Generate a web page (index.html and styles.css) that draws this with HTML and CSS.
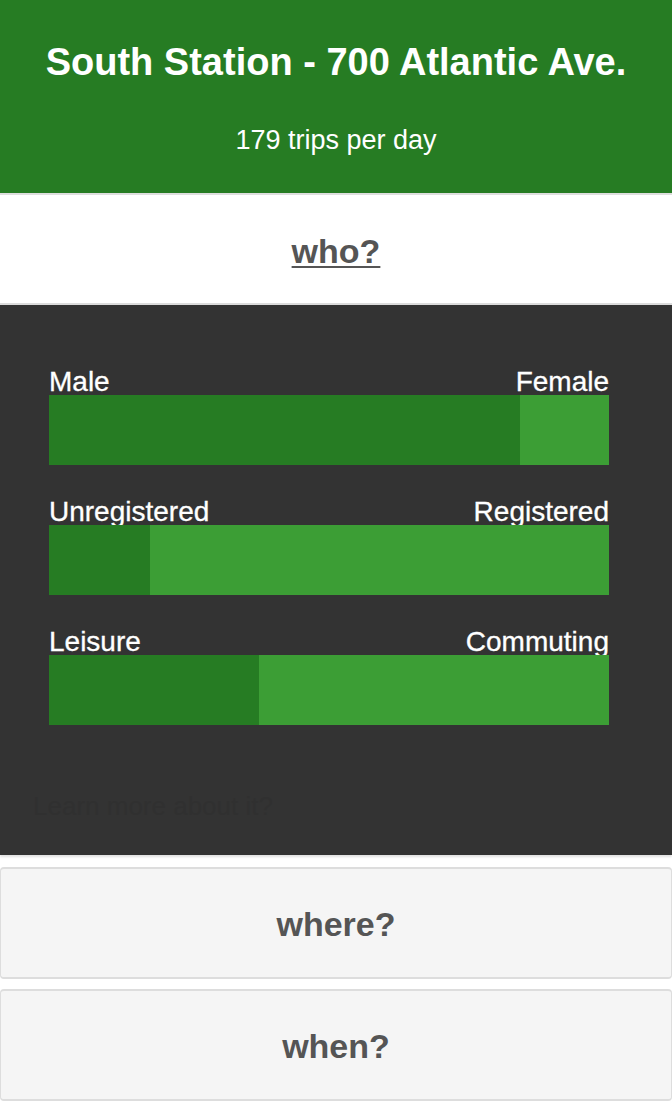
FILE: index.html
```html
<!DOCTYPE html>
<html lang="en">
<head>
<meta charset="utf-8">
<title>South Station</title>
<link rel="stylesheet" href="styles.css">
</head>
<body>
<header class="station">
  <h1 class="station-title">South Station - 700 Atlantic Ave.</h1>
  <p class="station-sub">179 trips per day</p>
</header>

<section class="panel-open">
  <div class="open-heading"><a class="open-link" href="#">who?</a></div>
  <div class="open-body">
    <div class="stat">
      <div class="stat-labels"><span>Male</span><span>Female</span></div>
      <div class="bar"><div class="bar-fill" style="width:84.1%"></div></div>
    </div>
    <div class="stat">
      <div class="stat-labels"><span>Unregistered</span><span>Registered</span></div>
      <div class="bar"><div class="bar-fill" style="width:18%"></div></div>
    </div>
    <div class="stat">
      <div class="stat-labels"><span>Leisure</span><span>Commuting</span></div>
      <div class="bar"><div class="bar-fill" style="width:37.5%"></div></div>
    </div>
    <p class="faint">Learn more about it?</p>
  </div>
</section>

<section class="panel">
  <div class="panel-heading">where?</div>
</section>
<section class="panel">
  <div class="panel-heading">when?</div>
</section>
</body>
</html>
```

FILE: styles.css
```css
html, body {
  margin: 0;
  padding: 0;
  background: #fff;
}
body {
  font-family: "Liberation Sans", Arial, Helvetica, sans-serif;
  width: 672px;
  overflow: hidden;
}

.station {
  background: #267c23;
  color: #fff;
  text-align: center;
  padding: 40px 0 37px;
  border-bottom: 2px solid #dedede;
}
.station-title {
  margin: 0;
  font-size: 38px;
  line-height: 44px;
  font-weight: bold;
}
.station-sub {
  margin: 40px 0 0;
  font-size: 27px;
  line-height: 32px;
}

.panel-open {
  box-shadow: 0 2px 2px rgba(0, 0, 0, 0.12);
}
.open-heading {
  background: #fff;
  text-align: center;
  font-size: 34px;
  font-weight: bold;
  padding-top: 4px;
  line-height: 104px;
  height: 104px;
  border-bottom: 2px solid #dcdcdc;
}
.open-link {
  color: #555;
  text-decoration: underline;
  text-decoration-thickness: 2px;
  text-underline-offset: 3px;
}
.open-body {
  background: #333;
  padding: 64px 63px 34px 49px;
}
.stat {
  display: flex;
  flex-direction: column;
}
.stat + .stat {
  margin-top: 34px;
}
.stat-labels {
  display: flex;
  justify-content: space-between;
  color: #fff;
  font-size: 28px;
  line-height: 32px;
  margin-top: -3px;
  margin-bottom: -3px;
  -webkit-text-stroke: 0.3px #fff;
}
.bar {
  position: relative;
  height: 70px;
  background: #3c9e35;
  display: flex;
}
.bar-fill {
  background: #267c23;
  height: 100%;
}
.faint {
  margin: 66px 0 0 -16px;
  font-size: 26px;
  line-height: 30px;
  color: #303030;
}

.panel {
  margin-top: 12px;
  background: #f5f5f5;
  border: 1px solid #dddddd;
  border-top-width: 2px;
  border-bottom-width: 2px;
  border-radius: 4px;
}
.panel + .panel {
  margin-top: 10px;
}
.panel-heading {
  text-align: center;
  color: #555;
  font-size: 34px;
  font-weight: bold;
  padding-top: 2px;
  line-height: 106px;
  height: 106px;
}
```
